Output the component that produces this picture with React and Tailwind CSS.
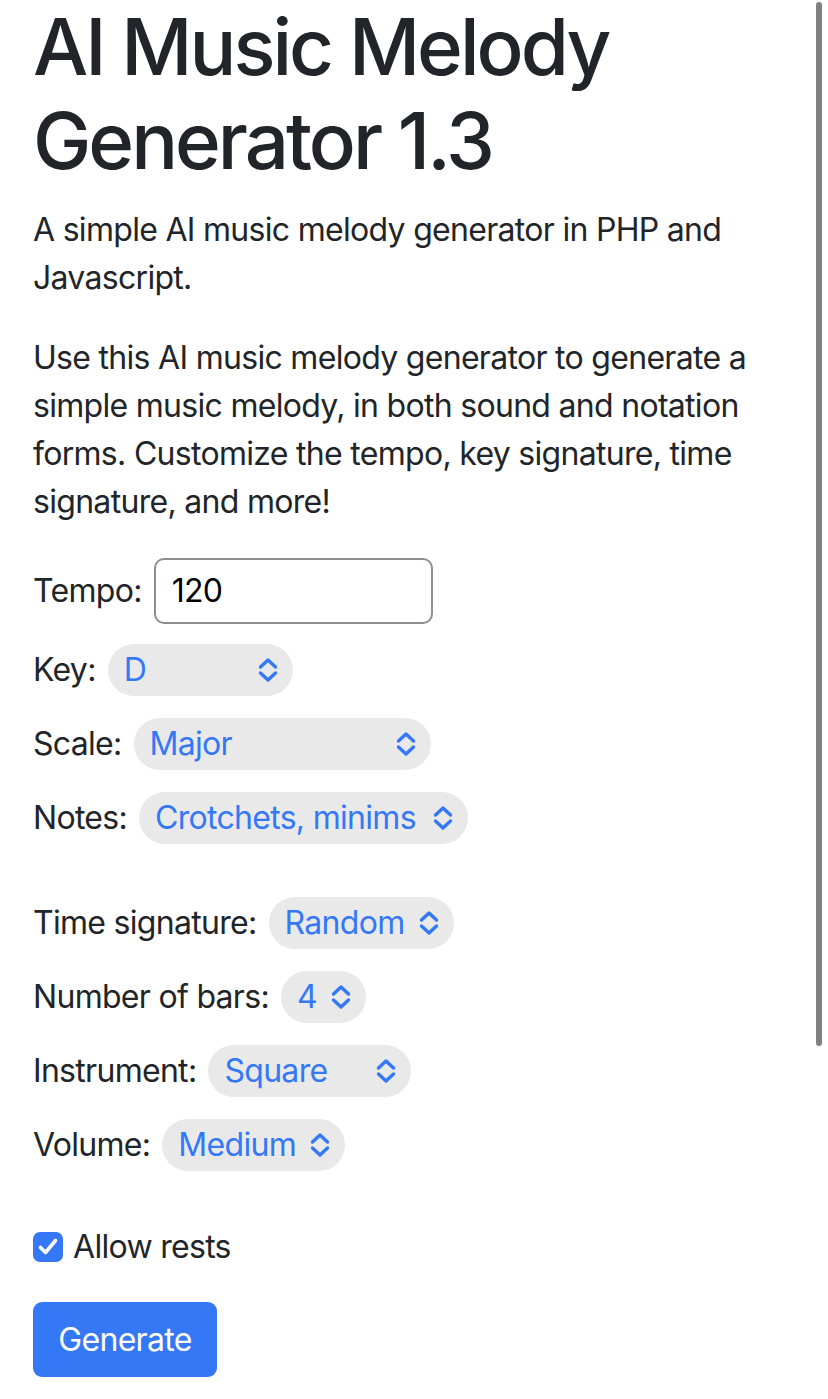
import { useState } from 'react';

// up/down chevrons like the iOS native select
function Chevrons() {
    return (
        <svg width="22" height="28" viewBox="0 0 22 28" fill="none" className="shrink-0">
            <path d="M3.5 11 L11 4 L18.5 11" stroke="#3478f6" strokeWidth="3.4" strokeLinecap="round" strokeLinejoin="round" />
            <path d="M3.5 17 L11 24 L18.5 17" stroke="#3478f6" strokeWidth="3.4" strokeLinecap="round" strokeLinejoin="round" />
        </svg>
    );
}

function Select({ value, width }) {
    return (
        <div
            className="h-[52px] rounded-full bg-[#e9e9ea] flex items-center justify-between pl-[16px] pr-[14px] text-[#3478f6]"
            style={{ width }}
        >
            <span>{value}</span>
            <Chevrons />
        </div>
    );
}

function Row({ label, children, className = '' }) {
    return (
        <div className={`flex items-center gap-[12px] ${className}`}>
            <span>{label}</span>
            {children}
        </div>
    );
}

export default function App() {
    const [rests, setRests] = useState(true);

    return (
        <div
            className="relative min-h-[1399px] bg-white text-[#212529] text-[32px] leading-[48px] px-[33px] tracking-[-0.7px]"
            style={{ fontFamily: 'Inter, "Noto Sans", sans-serif' }}
        >
            <h1 className="text-[78px] leading-[94px] font-medium tracking-[-3px] mb-[18px]">
                AI Music Melody Generator 1.3
            </h1>

            <p className="mb-[32px]">A simple AI music melody generator in PHP and Javascript.</p>
            <p className="mb-[32px]">
                Use this AI music melody generator to generate a simple music melody, in both sound and notation forms. Customize the tempo, key signature, time signature, and more!
            </p>

            <div className="flex flex-col">
                <Row label="Tempo:" className="gap-[8px]">
                    <div className="w-[279px] h-[66px] border-2 border-[#8e8e8e] rounded-[10px] flex items-center px-[16px] text-black">120</div>
                </Row>
                <Row label="Key:" className="mt-[20px]">
                    <Select value="D" width={185} />
                </Row>
                <Row label="Scale:" className="mt-[22px]">
                    <Select value="Major" width={297} />
                </Row>
                <Row label="Notes:" className="mt-[22px]">
                    <Select value="Crotchets, minims" width={329} />
                </Row>
                <Row label="Time signature:" className="mt-[53px]">
                    <Select value="Random" width={185} />
                </Row>
                <Row label="Number of bars:" className="mt-[22px]">
                    <Select value="4" width={85} />
                </Row>
                <Row label="Instrument:" className="mt-[22px]">
                    <Select value="Square" width={203} />
                </Row>
                <Row label="Volume:" className="mt-[22px]">
                    <Select value="Medium" width={183} />
                </Row>

                <label className="mt-[52px] flex items-center gap-[10px] cursor-pointer">
                    <button
                        onClick={() => setRests(!rests)}
                        className={`w-[30px] h-[30px] rounded-[7px] flex items-center justify-center ${rests ? 'bg-[#3478f6]' : 'bg-white border-2 border-[#8e8e8e]'}`}
                    >
                        {rests && (
                            <svg width="24" height="24" viewBox="0 0 24 24" fill="none">
                                <path d="M4.5 12.5 L9.5 17.5 L19.5 5.5" stroke="white" strokeWidth="3.6" strokeLinecap="round" strokeLinejoin="round" />
                            </svg>
                        )}
                    </button>
                    <span>Allow rests</span>
                </label>

                <div className="mt-[31px]">
                    <button className="h-[75px] w-[184px] rounded-[9px] bg-[#3478f6] text-white">Generate</button>
                </div>
            </div>

            {/* iOS overlay scroll indicator */}
            <div className="absolute right-[6px] top-[2px] w-[6px] h-[1044px] rounded-full bg-[#808080]" />
        </div>
    );
}
